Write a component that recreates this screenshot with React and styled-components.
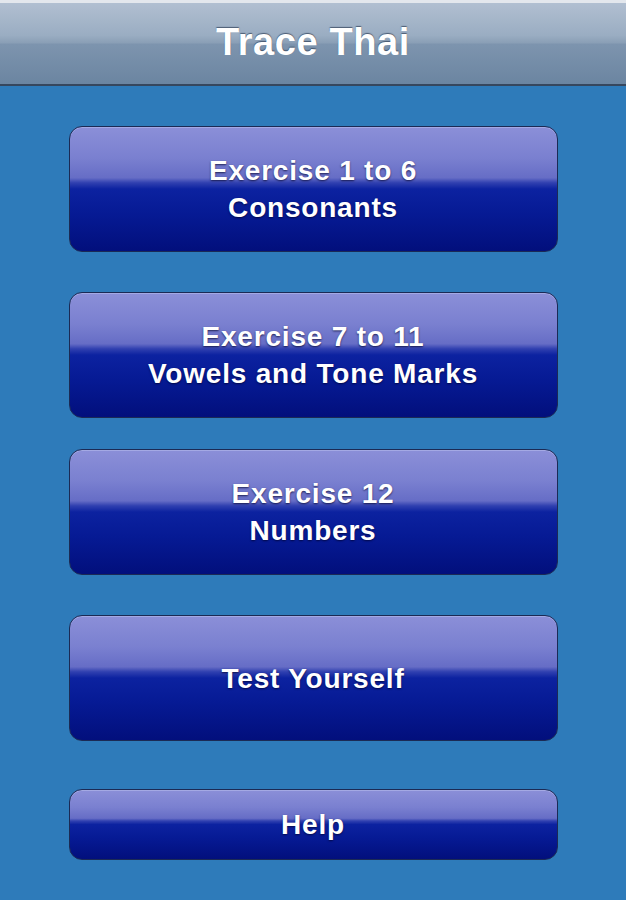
import React from "react";
import styled, { createGlobalStyle } from "styled-components";

const Global = createGlobalStyle`
  html, body { margin: 0; padding: 0; background: #2e7bba; }
  body { font-family: "Liberation Sans", Arial, sans-serif; }
`;

const Screen = styled.div`
  width: 626px;
  height: 900px;
  background: #2e7bba;
  display: flex;
  flex-direction: column;
  overflow: hidden;
`;

const TitleBar = styled.header`
  height: 81px;
  border-top: 3px solid #e3e7ed;
  border-bottom: 2px solid #36475e;
  background: linear-gradient(
    to bottom,
    #b1bfd1 0%,
    #9aadc2 40%,
    #8a9fb6 49%,
    #7d94ae 51%,
    #6b85a1 100%
  );
  display: flex;
  align-items: center;
  justify-content: center;
`;

const Title = styled.h1`
  margin: 0 0 2px 0;
  font-family: "Liberation Sans", Arial, sans-serif;
  font-weight: bold;
  font-size: 38px;
  letter-spacing: 0.6px;
  color: #ffffff;
  text-shadow: 0 -1px 1px rgba(40, 55, 80, 0.7);
`;

const Menu = styled.nav`
  display: flex;
  flex-direction: column;
  align-items: center;
`;

const MenuButton = styled.button`
  box-sizing: border-box;
  width: 489px;
  height: ${(p) => p.$h}px;
  margin-top: ${(p) => p.$top}px;
  border: 1.5px solid #1b2a55;
  border-radius: 13px;
  background: linear-gradient(
    to bottom,
    #8b8fd8 0%,
    #7a80d0 25%,
    #666dc6 ${(p) => p.$split - 4}%,
    #3040b0 ${(p) => p.$split}%,
    #0c22a0 ${(p) => p.$split + 5}%,
    #061a94 70%,
    #020f7c 100%
  );
  box-shadow: inset 0 1px 0 rgba(190, 195, 240, 0.5);
  color: #ffffff;
  font-family: "Liberation Sans", Arial, sans-serif;
  font-weight: bold;
  font-size: 28px;
  letter-spacing: 0.8px;
  line-height: 37px;
  text-align: center;
  text-shadow: 0 1px 2px rgba(0, 0, 40, 0.7);
  padding: 0;
  display: flex;
  flex-direction: column;
  align-items: center;
  justify-content: center;
  cursor: pointer;
`;

const items = [
  { lines: ["Exercise 1 to 6", "Consonants"], top: 40, h: 126, split: 45 },
  { lines: ["Exercise 7 to 11", "Vowels and Tone Marks"], top: 40, h: 126, split: 45 },
  { lines: ["Exercise 12", "Numbers"], top: 31, h: 126, split: 45 },
  { lines: ["Test Yourself"], top: 40, h: 126, split: 45 },
  { lines: ["Help"], top: 48, h: 71, split: 45 },
];

export default function App() {
  return (
    <>
      <Global />
      <Screen>
        <TitleBar>
          <Title>Trace Thai</Title>
        </TitleBar>
        <Menu>
          {items.map((it) => (
            <MenuButton key={it.lines[0]} $top={it.top} $h={it.h} $split={it.split}>
              {it.lines.map((l) => (
                <span key={l}>{l}</span>
              ))}
            </MenuButton>
          ))}
        </Menu>
      </Screen>
    </>
  );
}
